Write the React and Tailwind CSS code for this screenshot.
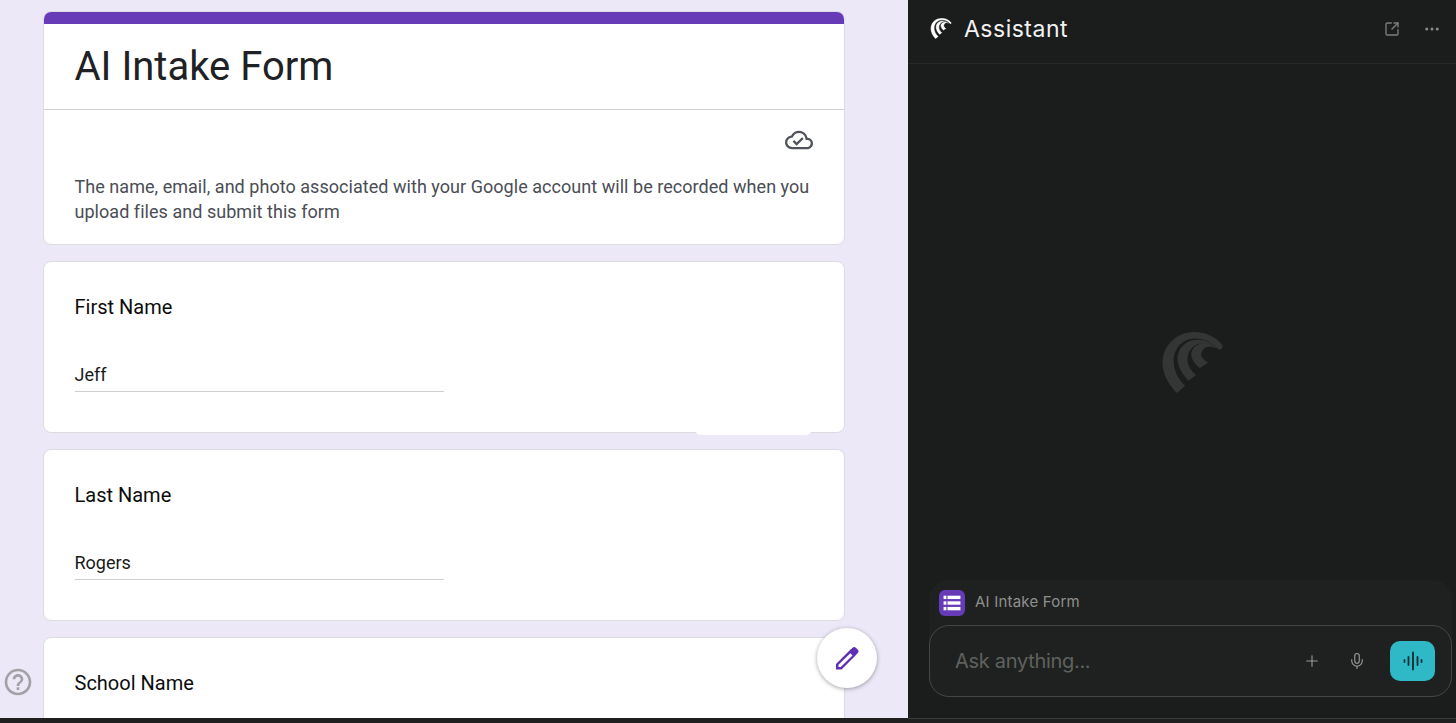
import React from 'react';
import { Ellipsis, Mic, Plus, SquareArrowOutUpRight } from 'lucide-react';
import { MdHelpOutline, MdOutlineCloudDone } from 'react-icons/md';

const WaveLogo = ({ className, gap = 0 }) => (
    <svg viewBox="120 90 190 200" className={className} fill="currentColor" stroke="#1b1d1c" strokeWidth={gap}>
        <path d="M168 282C115 230 108 160 160 118C205 85 270 95 303 135A9 9 0 0 1 290 148C260 112 205 108 178 135C145 170 155 225 193 260Z" />
        <path d="M203 245C165 205 160 165 187 138C215 112 262 118 290 148C265 128 235 126 214 145C190 170 197 205 226 228Z" />
        <path d="M237 207C205 180 205 155 225 140C245 125 270 130 290 148C270 140 252 140 244 155C236 170 246 180 262 190Z" />
    </svg>
);

const PencilIcon = () => (
    <svg viewBox="0 0 24 24" className="w-[24px] h-[24px] text-[#5e2fb5]" fill="currentColor">
        <path fillRule="evenodd" d="M1 23V18L16 3L21.500 8.500L6.500 23.500H1ZM3.500 18.800V21H5.700L17.500 9.500L15.300 7.300Z" />
        <path d="M17.500 1.800C18.500 0.800 19.800 0.800 20.800 1.800L22.800 3.800C23.800 4.800 23.800 6 22.800 7L21 8.800L15.800 3.500Z" />
    </svg>
);

const FormsIcon = () => (
    <svg viewBox="0 0 16 16" className="w-[18px] h-[18px] text-white" fill="currentColor">
        <rect x="0.500" y="1.500" width="2.500" height="3" />
        <rect x="4" y="1.500" width="11.500" height="3" />
        <rect x="0.500" y="6.500" width="2.500" height="3" />
        <rect x="4" y="6.500" width="11.500" height="3" />
        <rect x="0.500" y="11.500" width="2.500" height="3" />
        <rect x="4" y="11.500" width="11.500" height="3" />
    </svg>
);

const WaveformIcon = () => (
    <svg viewBox="0 0 20 20" className="w-[20px] h-[20px] text-[#0b2f35]" stroke="currentColor" strokeWidth="1.800" strokeLinecap="round">
        <path d="M1.500 9V11" />
        <path d="M5.500 6V14" />
        <path d="M10 1.500V18.500" />
        <path d="M14.500 6V14" />
        <path d="M18.500 9V11" />
    </svg>
);

const FieldCard = ({ label, value }) => (
    <div className="h-[172px] bg-white border border-[#dadce0] rounded-[8px] pt-[32px] pl-[30.500px]">
        <div className="text-[20px] leading-[26px] text-[#0c0c0c]">{label}</div>
        <div className="mt-[42px] w-[369px] h-[30px] border-b border-[#cfcfcf] text-[18px] leading-[26px] text-[#1a1a1a]">{value}</div>
    </div>
);

const FormPanel = () => (
    <div className="relative w-[908px] h-full bg-[#ece8f7] overflow-hidden font-[Roboto,sans-serif]">
        <div className="flex flex-col gap-[16px] w-[802px] ml-[43px] pt-[11px]">
            <div className="h-[234px] bg-white border border-[#dadce0] rounded-[8px] overflow-hidden">
                <div className="h-[12px] -mx-px bg-[#673ab7]" />
                <div className="h-[86px] border-b border-[#d0d0d0] pl-[30.500px] pt-[15px] text-[40px] leading-[56px] text-[#202124]">AI Intake Form</div>
                <div className="flex justify-end pr-[31px] pt-[16px] h-[64px]">
                    <MdOutlineCloudDone className="w-[28px] h-[28px] text-[#50545a]" />
                </div>
                <p className="pl-[30.500px] pr-[30px] text-[18px] leading-[25px] tracking-[0.04px] text-[#4a4d55]">
                    The name, email, and photo associated with your Google account will be recorded when you upload files and submit this form
                </p>
            </div>
            <FieldCard label="First Name" value="Jeff" />
            <FieldCard label="Last Name" value="Rogers" />
            <div className="h-[172px] bg-white border border-[#dadce0] rounded-[8px] pt-[32px] pl-[30.500px]">
                <div className="text-[20px] leading-[26px] text-[#0c0c0c]">School Name</div>
            </div>
        </div>
        <div className="absolute left-[695px] top-[428px] w-[117px] h-[7px] bg-white rounded-b-[6px]" />
        <MdHelpOutline className="absolute left-[2px] top-[666px] w-[32px] h-[32px] text-[#a3a1a8]" />
        <button className="absolute left-[817px] top-[628px] w-[60px] h-[60px] rounded-full bg-white shadow-[0_1px_4px_rgba(0,0,0,0.35)] flex items-center justify-center">
            <PencilIcon />
        </button>
    </div>
);

const AssistantPanel = () => (
    <div className="flex-1 h-full flex flex-col bg-[#1b1d1c] font-[Inter,sans-serif]">
        <div className="h-[64px] shrink-0 border-b border-[#272928] flex items-center pl-[22px] pr-[15px] pb-[6px]">
            <WaveLogo className="w-[22px] h-[23px] text-white" gap={3} />
            <span className="ml-[12px] text-[23px] leading-[30px] tracking-[0.5px] text-[#f2f2f2]">Assistant</span>
            <SquareArrowOutUpRight className="ml-auto w-[16px] h-[16px] text-[#7c7e7d]" />
            <Ellipsis className="ml-[23px] w-[18px] h-[18px] text-[#8a8c8b]" />
        </div>
        <div className="flex-1 flex items-center justify-center pl-[21px] pt-[80px]">
            <WaveLogo className="w-[63px] h-[67px] text-[#343535]" />
        </div>
        <div className="ml-[21px] mr-[4px] mb-[21px] h-[117px] bg-[#1f2120] rounded-[20px] flex flex-col">
            <div className="h-[45px] flex items-center pl-[10px]">
                <div className="w-[26px] h-[26px] rounded-[6px] bg-[#673ab7] flex items-center justify-center">
                    <FormsIcon />
                </div>
                <span className="ml-[10px] text-[15px] leading-[20px] pb-[2px] tracking-[0.2px] text-[#8f908f]">AI Intake Form</span>
            </div>
            <div className="h-[72px] border border-[#454746] rounded-[20px] bg-[#1f2120] flex items-center pl-[25px] pr-[16px]">
                <span className="text-[20px] tracking-[-0.3px] text-[#5f615f]">Ask anything...</span>
                <Plus className="ml-auto w-[18px] h-[18px] text-[#9a9b9a]" strokeWidth={1.5} />
                <Mic className="ml-[27px] w-[18px] h-[18px] text-[#9a9b9a]" strokeWidth={1.5} />
                <div className="ml-[24px] w-[45px] h-[40px] rounded-[10px] bg-[#2fb8c6] flex items-center justify-center">
                    <WaveformIcon />
                </div>
            </div>
        </div>
    </div>
);

const App = () => (
    <div className="w-[1456px] h-[723px] flex flex-col overflow-hidden bg-[#1f1f1f]">
        <div className="h-[718px] flex">
            <FormPanel />
            <AssistantPanel />
        </div>
        <div className="flex-1 flex">
            <div className="w-[908px]" />
            <div className="flex-1 border-t border-[#3c3c3c]" />
        </div>
    </div>
);

export default App;
